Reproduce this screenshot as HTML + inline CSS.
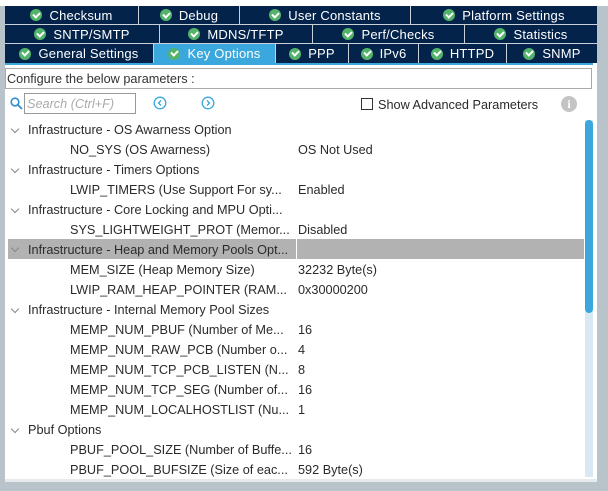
<!DOCTYPE html>
<html><head><style>
*{margin:0;padding:0;box-sizing:border-box}
body{width:608px;height:491px;background:#b9c3ca;position:relative;overflow:hidden;font-family:"Liberation Sans",sans-serif;font-size:12.7px;color:#2a2a2a}
.panel{position:absolute;left:5px;top:0;width:592px;height:479px;background:#fff}
.bot{position:absolute;left:5px;top:479px;width:592px;height:3px;background:#e6eaec}
.tab{position:absolute;background:#03234b;color:#fff;font-size:13px;display:flex;align-items:center;justify-content:center;border-right:1px solid #c8d0d8;white-space:nowrap;letter-spacing:0.2px}
.tab.act{background:#3aa8dc}
.ck{display:inline-block;width:12px;height:12px;border-radius:50%;background:#53b36b;margin-right:7px;position:relative}
.ck:after{content:"";position:absolute;left:3px;top:2.5px;width:5px;height:3px;border-left:2px solid #fff;border-bottom:2px solid #fff;transform:rotate(-45deg)}
.row{position:absolute;left:8px;width:576px;height:20px;line-height:20px;white-space:nowrap}
.row.h{background:#b2b2b2}
.row .n{position:absolute;left:62px}
.row .g{position:absolute;left:20px}
.row .v{position:absolute;left:290px}
.row .ar{position:absolute;left:4px;top:6px;width:6px;height:6px;border-right:1px solid #888;border-bottom:1px solid #888;transform:rotate(45deg)}
</style></head><body>
<div class="panel"></div>
<div class="bot"></div>
<div style="position:absolute;left:0;top:0;width:608px;height:6px;background:#fff"></div>
<div class="tab" style="left:5px;top:6px;width:134px;height:18px"><span class="ck"></span>Checksum</div>
<div class="tab" style="left:139px;top:6px;width:101px;height:18px"><span class="ck"></span>Debug</div>
<div class="tab" style="left:240px;top:6px;width:171px;height:18px"><span class="ck"></span>User Constants</div>
<div class="tab" style="left:411px;top:6px;width:186px;height:18px;border-right:none"><span class="ck"></span>Platform Settings</div>
<div style="position:absolute;left:5px;top:24px;width:592px;height:1px;background:#c8d0d8"></div>
<div class="tab" style="left:5px;top:25px;width:155px;height:18px"><span class="ck"></span>SNTP/SMTP</div>
<div class="tab" style="left:160px;top:25px;width:153px;height:18px"><span class="ck"></span>MDNS/TFTP</div>
<div class="tab" style="left:313px;top:25px;width:152px;height:18px"><span class="ck"></span>Perf/Checks</div>
<div class="tab" style="left:465px;top:25px;width:132px;height:18px;border-right:none"><span class="ck"></span>Statistics</div>
<div style="position:absolute;left:5px;top:43px;width:592px;height:1px;background:#c8d0d8"></div>
<div class="tab" style="left:5px;top:44px;width:149px;height:19px"><span class="ck"></span>General Settings</div>
<div class="tab act" style="left:154px;top:44px;width:122px;height:19px"><span class="ck"></span>Key Options</div>
<div class="tab" style="left:276px;top:44px;width:73px;height:19px"><span class="ck"></span>PPP</div>
<div class="tab" style="left:349px;top:44px;width:70px;height:19px"><span class="ck"></span>IPv6</div>
<div class="tab" style="left:419px;top:44px;width:88px;height:19px"><span class="ck"></span>HTTPD</div>
<div class="tab" style="left:507px;top:44px;width:90px;height:19px;border-right:none"><span class="ck"></span>SNMP</div>
<div style="position:absolute;left:5px;top:63px;width:588px;height:2px;background:#3aa8dc"></div>
<div style="position:absolute;left:5px;top:68px;width:587px;height:21px;border:1px solid #aaa;line-height:20px;padding-left:1px;color:#333">Configure the below parameters :</div>
<svg style="position:absolute;left:10px;top:97px" width="13" height="13"><circle cx="5" cy="5" r="3.8" fill="none" stroke="#2d8fd0" stroke-width="1.6"/><line x1="8" y1="8" x2="12" y2="12" stroke="#2d8fd0" stroke-width="1.8"/></svg>
<div style="position:absolute;left:24px;top:93px;width:112px;height:21px;border:1px solid #999;font-style:italic;color:#aaa;line-height:20px;padding-left:2px">Search (Ctrl+F)</div>
<svg style="position:absolute;left:153px;top:96px" width="14" height="14"><circle cx="7" cy="7" r="5.8" fill="none" stroke="#3aa8dc" stroke-width="1.3"/><path d="M8 4.5 L5.5 7 L8 9.5" fill="none" stroke="#3aa8dc" stroke-width="1.4"/></svg>
<svg style="position:absolute;left:201px;top:96px" width="14" height="14"><circle cx="7" cy="7" r="5.8" fill="none" stroke="#3aa8dc" stroke-width="1.3"/><path d="M6 4.5 L8.5 7 L6 9.5" fill="none" stroke="#3aa8dc" stroke-width="1.4"/></svg>
<div style="position:absolute;left:361px;top:98px;width:12px;height:12px;border:1px solid #333"></div>
<div style="position:absolute;left:378px;top:97px;line-height:16px">Show Advanced Parameters</div>
<div style="position:absolute;left:561px;top:96px;width:16px;height:16px;border-radius:50%;background:#c4c4c4;color:#fff;font-weight:bold;font-size:12px;text-align:center;line-height:16px;font-family:'Liberation Serif',serif">i</div>
<div style="position:absolute;left:585px;top:120px;width:8px;height:357px;background:#d8e8f5"></div>
<div style="position:absolute;left:585px;top:120px;width:8px;height:193px;background:#3aa8dc;border-radius:4px"></div>
<div class="row" style="top:120px"><span class="ar"></span><span class="g">Infrastructure - OS Awarness Option</span></div>
<div class="row" style="top:140px"><span class="n">NO_SYS (OS Awarness)</span><span class="v">OS Not Used</span></div>
<div class="row" style="top:160px"><span class="ar"></span><span class="g">Infrastructure - Timers Options</span></div>
<div class="row" style="top:180px"><span class="n">LWIP_TIMERS (Use Support For sy...</span><span class="v">Enabled</span></div>
<div class="row" style="top:200px"><span class="ar"></span><span class="g">Infrastructure - Core Locking and MPU Opti...</span></div>
<div class="row" style="top:220px"><span class="n">SYS_LIGHTWEIGHT_PROT (Memor...</span><span class="v">Disabled</span></div>
<div class="row h" style="top:239px;height:20px"><span class="ar"></span><span class="g" style="top:1px">Infrastructure - Heap and Memory Pools Opt...</span><span style="position:absolute;left:288px;top:0;width:1px;height:20px;background:#fff"></span></div>
<div class="row" style="top:260px"><span class="n">MEM_SIZE (Heap Memory Size)</span><span class="v">32232 Byte(s)</span></div>
<div class="row" style="top:280px"><span class="n">LWIP_RAM_HEAP_POINTER (RAM...</span><span class="v">0x30000200</span></div>
<div class="row" style="top:300px"><span class="ar"></span><span class="g">Infrastructure - Internal Memory Pool Sizes</span></div>
<div class="row" style="top:320px"><span class="n">MEMP_NUM_PBUF (Number of Me...</span><span class="v">16</span></div>
<div class="row" style="top:340px"><span class="n">MEMP_NUM_RAW_PCB (Number o...</span><span class="v">4</span></div>
<div class="row" style="top:360px"><span class="n">MEMP_NUM_TCP_PCB_LISTEN (N...</span><span class="v">8</span></div>
<div class="row" style="top:380px"><span class="n">MEMP_NUM_TCP_SEG (Number of...</span><span class="v">16</span></div>
<div class="row" style="top:400px"><span class="n">MEMP_NUM_LOCALHOSTLIST (Nu...</span><span class="v">1</span></div>
<div class="row" style="top:420px"><span class="ar"></span><span class="g">Pbuf Options</span></div>
<div class="row" style="top:440px"><span class="n">PBUF_POOL_SIZE (Number of Buffe...</span><span class="v">16</span></div>
<div class="row" style="top:460px"><span class="n">PBUF_POOL_BUFSIZE (Size of eac...</span><span class="v">592 Byte(s)</span></div>
</body></html>
